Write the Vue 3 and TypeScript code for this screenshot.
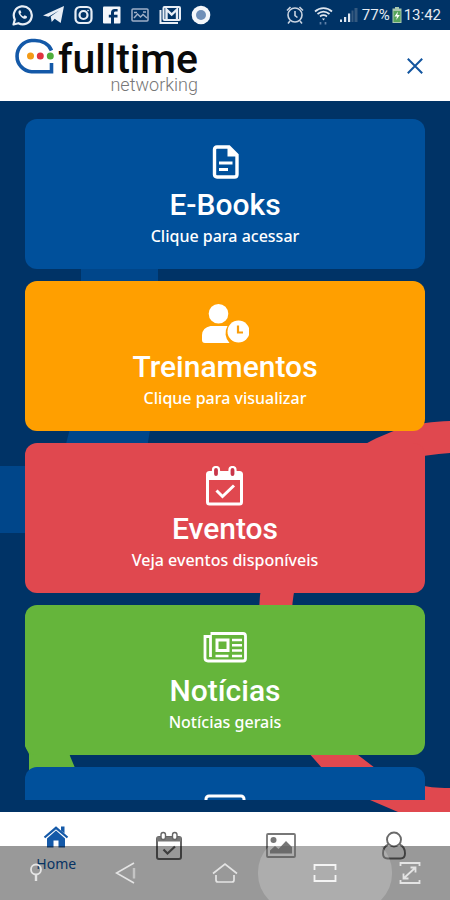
<script setup lang="ts">
import { ref } from 'vue'

type CardIcon = 'document' | 'training' | 'calendar' | 'news' | 'screen'
type NavIcon = 'home' | 'calendar' | 'picture' | 'user'

interface MenuCard {
  icon: CardIcon
  tone: string
  title: string
  hint: string
}

interface NavItem {
  icon: NavIcon
  name: string
  label: string
}

const cards: MenuCard[] = [
  { icon: 'document', tone: 'blue', title: 'E-Books', hint: 'Clique para acessar' },
  { icon: 'training', tone: 'orange', title: 'Treinamentos', hint: 'Clique para visualizar' },
  { icon: 'calendar', tone: 'red', title: 'Eventos', hint: 'Veja eventos disponíveis' },
  { icon: 'news', tone: 'green', title: 'Notícias', hint: 'Notícias gerais' },
  { icon: 'screen', tone: 'blue', title: '', hint: '' },
]

const navItems: NavItem[] = [
  { icon: 'home', name: 'Home', label: 'Home' },
  { icon: 'calendar', name: 'Eventos', label: '' },
  { icon: 'picture', name: 'Galeria', label: '' },
  { icon: 'user', name: 'Perfil', label: '' },
]

const active = ref<NavIcon>('home')
</script>

<template>
  <div class="screen">
    <div class="status">
      <div class="status-left">
        <svg width="21" height="22" viewBox="0 0 21 22" fill="none" stroke="#e8eef6">
          <path d="M1.5 20.5l1.3-5A9 9 0 1 1 6.400 19.200z" stroke-width="2.200" stroke-linejoin="round" />
          <path d="M7 6.500c-1.200 1.500-.4 3.700 1.800 6s4.600 3 6 1.500l.2-1.500-2.300-1.200-1.300 1.200c-1.500-.6-2.400-1.500-3-3l1-1-1-2.300z" fill="#e8eef6" stroke="none" />
        </svg>
        <svg width="21" height="20" viewBox="0 0 21 20" fill="#e8eef6">
          <path d="M0 10.500L21 1l-3.300 17-6-4.300-3 3.300-1-5.500L16 5.500 5.500 11.800z" />
        </svg>
        <svg width="19" height="20" viewBox="0 0 19 20" fill="none" stroke="#e8eef6" stroke-width="2.200">
          <rect x="1.500" y="2" width="16" height="16" rx="4.500" />
          <circle cx="9.500" cy="10" r="4" />
          <circle cx="14" cy="5.600" r=".5" stroke-width="1" />
        </svg>
        <svg width="18" height="20" viewBox="0 0 18 20">
          <rect x="0" y="1.500" width="17.500" height="17" rx="1" fill="#f4f7fb" />
          <path d="M11 19v-6.500h3.500v-2.700H11V8c0-1 .5-1.500 1.600-1.500h2V4h-2.800C9.200 4 8 5.500 8 7.600v2.200H5.800v2.700H8V19z" fill="#033468" />
        </svg>
        <svg width="18" height="20" viewBox="0 0 18 20" fill="none" stroke="#9fb0c8" stroke-width="1.500">
          <rect x="1" y="4" width="16" height="12" rx="1" />
          <path d="M3 13l3.500-4 3 3 2.500-2.500 4 3.500M3 7.500h3M12 7h3" />
        </svg>
        <svg width="22" height="20" viewBox="0 0 22 20" fill="none" stroke="#e8eef6" stroke-width="2">
          <path d="M1.500 5v13H19" />
          <rect x="4.500" y="2" width="16.500" height="13" rx="1" />
          <path d="M7.500 15V4.500l5.200 5 5.300-5V15" stroke-width="2.400" />
        </svg>
        <svg width="20" height="20" viewBox="0 0 20 20">
          <circle cx="10" cy="10" r="9.300" fill="#f4f7fb" />
          <circle cx="10" cy="10" r="5" fill="#6f8fb8" />
        </svg>
      </div>
      <div class="status-right">
        <svg class="alarm" width="18" height="20" viewBox="0 0 18 20" fill="none" stroke="#c9d3e0" stroke-width="1.600">
          <circle cx="9" cy="10" r="7" />
          <path d="M9 6v4.500l2.500 2M1 5.500L4.500 2M17 5.500L13.500 2M4 16l-2 2.500M14 16l2 2.500" />
        </svg>
        <svg class="wifi" width="19" height="20" viewBox="0 0 19 20" fill="none" stroke="#dfe6ef" stroke-width="1.700">
          <path d="M1 6.500c5-4.500 12-4.500 17 0M3.500 9c3.700-3 8.300-3 12 0M6 11.500c2.300-1.700 4.700-1.700 7 0" />
          <path d="M8 13.500h3l-1.500 2z" fill="#dfe6ef" stroke="none" />
          <path d="M6.500 17v2.500M11.500 17v2.500" stroke="#5f80a8" />
        </svg>
        <svg width="19" height="18" viewBox="0 0 19 18">
          <path d="M1 13.500h2V16H1zM5 11h2.200v5H5zM9 7.500h2.200V16H9z" fill="#dfe6ef" />
          <path d="M12.500 4.500h2V16h-2zM15.500 2h3v14h-3z" fill="#34597f" />
        </svg>
        <span class="battery-level">77%</span>
        <svg class="battery" width="10" height="16" viewBox="0 0 10 16">
          <path d="M3 0h4v1.500h2.500V16H.5V1.500H3z" fill="#a9c8ae" />
          <rect x="1.500" y="4" width="7" height="11" fill="#58a55c" />
          <path d="M6 4.500L2.500 9.500H5L4.200 13l3.600-5H5.300z" fill="#fff" />
        </svg>
        <span>13:42</span>
      </div>
    </div>

    <header class="header">
      <a class="logo" href="#" aria-label="fulltime networking">
        <svg class="mark" width="41" height="38" viewBox="13 36 41 38" fill="none">
          <path d="M51.500 49.500C49 43 42 39.500 35 39.500H31.500A15.700 15.700 0 0 0 31.500 70.800H51.500V62" stroke="#1459a8" stroke-width="3.600" />
          <circle cx="30.500" cy="55" r="3.500" fill="#f39a16" />
          <circle cx="40.300" cy="55" r="3.500" fill="#e0343f" />
          <circle cx="50.300" cy="55" r="3.500" fill="#4fae3a" />
        </svg>
        <span class="wordmark">
          <span class="word-main">fulltime</span>
          <span class="word-sub">networking</span>
        </span>
      </a>
      <button class="close" type="button" aria-label="Fechar">
        <svg width="16" height="16" viewBox="0 0 16 16" fill="none" stroke="#12559f" stroke-width="2">
          <path d="M.8.8l14.400 14.400M15.200.8L.8 15.200" />
        </svg>
      </button>
    </header>

    <main class="content">
      <svg class="backdrop" viewBox="0 101 450 711" preserveAspectRatio="xMidYMid slice" aria-hidden="true">
        <path d="M81 180H158V360C158 400 150 425 147 450V533H0V466H60C64 450 81 400 81 340z" fill="#00468a" />
        <path d="M450 421C415 422 390 430 360 447C295 480 262 540 259 610H292C297 540 340 480 400 461C420 456 435 454 450 453z" fill="#e0484f" />
        <path d="M300 743L322 768C336 781 352 792 370 800L398 812H450V788C435 788 427 787 420 785C400 780 385 775 375 768L345 745z" fill="#e0484f" />
        <path d="M25 738V746L29 754V775H78L70 756L66 738z" fill="#65b53b" />
      </svg>
      <div class="list">
        <button v-for="(card, i) in cards" :key="i" type="button" class="card" :class="card.tone">
          <svg class="card-icon" width="48" height="40" viewBox="0 0 48 40" fill="none" stroke="#fff" aria-hidden="true">
            <template v-if="card.icon === 'document'">
              <path d="M16 5H28L36 13V32.500Q36 35 33.500 35H16Q13.500 35 13.500 32.500V7.500Q13.500 5 16 5z" stroke-width="3.400" />
              <path d="M26.500 5L36 14.500H26.500z" fill="#fff" stroke="none" />
              <path d="M18 21H31.500M18 27.500H27" stroke-width="3" />
            </template>
            <template v-else-if="card.icon === 'training'">
              <g fill="#fff" stroke="none">
                <circle cx="17.500" cy="9.800" r="9.800" />
                <path d="M9.500 22H26.500A14 14 0 0 0 28.500 39H4Q1 39 1 36V31Q1.500 23.500 9.500 22z" />
                <circle cx="37.500" cy="27.500" r="11" />
              </g>
              <path d="M37 21.500V28.500H42" stroke="#f99d0a" stroke-width="2.200" />
            </template>
            <template v-else-if="card.icon === 'calendar'">
              <rect x="6.500" y="6.500" width="34" height="31.500" rx="2" stroke-width="3" />
              <path d="M6 6H41V14H6z" fill="#fff" stroke="none" />
              <rect x="12" y="1" width="6" height="10" rx="3" fill="#c9364a" stroke-width="2.200" />
              <rect x="28.500" y="1" width="6" height="10" rx="3" fill="#c9364a" stroke-width="2.200" />
              <path d="M15.500 24.500L21.500 30.500L33 19.500" stroke-width="3" />
            </template>
            <template v-else-if="card.icon === 'news'">
              <path d="M9.500 5.500H42Q44.500 5.500 44.500 8V30.500Q44.500 33 42 33H7Q4 33 4 30V8.500H9.500V29" stroke-width="2.800" />
              <rect x="16" y="12" width="11" height="10.500" stroke-width="3" />
              <path d="M31 12H41M31 17.300H41M31 22.500H41M14.500 28H27.500M31 28H41" stroke-width="2.600" />
            </template>
            <template v-else>
              <rect x="5" y="6" width="38" height="25" rx="3" stroke-width="3" />
              <path d="M1 36H47" stroke-width="3" />
            </template>
          </svg>
          <span v-if="card.title" class="card-title">{{ card.title }}</span>
          <span v-if="card.hint" class="card-hint">{{ card.hint }}</span>
        </button>
      </div>
    </main>

    <footer class="bottom">
      <nav class="tabs">
        <a
          v-for="item in navItems"
          :key="item.icon"
          href="#"
          class="tab"
          :class="{ current: active === item.icon }"
          :aria-label="item.name"
          @click.prevent="active = item.icon"
        >
          <svg v-if="item.icon === 'home'" width="26" height="22" viewBox="0 0 26 22" fill="#1459a8">
            <path d="M13 4.500L22 12.500V21.500H15.500V14.500H10.500V21.500H4V12.500z" />
            <path d="M1.500 11.500L13 1.800L24.500 11.500" fill="none" stroke="#1459a8" stroke-width="2.200" />
            <path d="M18 .5H21.500V7.500L18 4.500z" />
          </svg>
          <svg v-else-if="item.icon === 'calendar'" width="28" height="30" viewBox="0 0 28 30" fill="none" stroke="#666">
            <rect x="2" y="6" width="24" height="22" rx="2" stroke-width="2" />
            <path d="M2 6H26V10.500H2z" fill="#777" stroke="none" />
            <rect x="6" y="1.500" width="4.500" height="7" rx="2.200" fill="#fff" stroke-width="1.400" />
            <rect x="17.500" y="1.500" width="4.500" height="7" rx="2.200" fill="#fff" stroke-width="1.400" />
            <path d="M8.500 18.500L12.500 22.500L20 15.500" stroke-width="2.200" />
          </svg>
          <svg v-else-if="item.icon === 'picture'" width="30" height="30" viewBox="0 0 30 30" fill="#777">
            <rect x="1" y="3" width="28" height="23" rx="1" fill="none" stroke="#777" stroke-width="1.800" />
            <circle cx="7.500" cy="9" r="3" />
            <path d="M4 22.500V19.500L9 15L12.500 18L20 10L26 16V22.500z" />
          </svg>
          <svg v-else width="26" height="30" viewBox="0 0 26 30" fill="none" stroke="#6a6a6a" stroke-width="1.900">
            <circle cx="13" cy="8.500" r="7" />
            <path d="M7.500 13.500C3.500 15 2 18.500 2 22.500Q2 27.500 6.500 27.500H19.500Q24 27.500 24 22.500C24 18.500 22.500 15 18.500 13.500" />
          </svg>
          <span v-if="item.label" class="tab-label">{{ item.label }}</span>
        </a>
      </nav>

      <div class="system">
        <button type="button" class="sys" aria-label="Ocultar barra">
          <svg width="14" height="20" viewBox="0 0 14 20" fill="none" stroke="#e4e4e4" stroke-width="1.800">
            <circle cx="7" cy="6.500" r="5" />
            <path d="M7 11.500V18" stroke-width="2.400" />
          </svg>
        </button>
        <button type="button" class="sys" aria-label="Voltar">
          <svg width="22" height="22" viewBox="0 0 22 22" fill="none" stroke="#e4e4e4" stroke-width="1.600">
            <path d="M19 1L1.500 11L19 21" />
            <path d="M19 6V16.500" stroke="#c4c4c4" stroke-width="2.400" />
          </svg>
        </button>
        <button type="button" class="sys" aria-label="Início">
          <svg width="26" height="22" viewBox="0 0 26 22" fill="none" stroke="#e4e4e4" stroke-width="1.700">
            <path d="M1 11.500L13 2L25 11.500" />
            <path d="M4 13V18Q4 20 6 20H20Q22 20 22 18V13" />
          </svg>
        </button>
        <button type="button" class="sys pressed" aria-label="Recentes">
          <svg width="24" height="20" viewBox="0 0 24 20" fill="none" stroke="#f4f4f4" stroke-width="1.800">
            <path d="M1.500 7V2H22.500V7M1.500 12V18H22.500V12" />
          </svg>
        </button>
        <button type="button" class="sys" aria-label="Tela cheia">
          <svg width="22" height="24" viewBox="0 0 22 24" fill="none" stroke="#e4e4e4" stroke-width="1.800">
            <path d="M1.500 5V2H20.500V5M1.500 19V22H20.500V19" />
            <path d="M4.500 17.500L16.500 6.500M4.500 12.500V17.500H9.500M11.500 6.500H16.500V11.500" />
          </svg>
        </button>
      </div>
    </footer>
  </div>
</template>

<style>
body {
  margin: 0;
  background: #003366;
}
</style>

<style scoped>
.screen {
  display: flex;
  flex-direction: column;
  height: 100vh;
  overflow: hidden;
  background: #003366;
  font-family: 'Noto Sans', 'Liberation Sans', sans-serif;
}

button {
  margin: 0;
  padding: 0;
  border: 0;
  background: none;
  font: inherit;
  cursor: pointer;
}

svg {
  display: block;
  flex: none;
}

.status {
  display: flex;
  flex: none;
  align-items: center;
  justify-content: space-between;
  height: 30px;
  padding: 0 9px 0 12px;
  color: #e6ebf2;
  font-family: Roboto, 'Liberation Sans', sans-serif;
  font-size: 15px;
}

.status-left {
  display: flex;
  align-items: center;
  gap: 10px;
}

.status-right {
  display: flex;
  align-items: center;
}

.alarm {
  margin-right: 10px;
}

.wifi {
  margin-right: 6px;
}

.battery-level {
  margin-left: 4px;
}

.battery {
  margin: 0 2px;
}

.header {
  display: flex;
  flex: none;
  align-items: center;
  justify-content: space-between;
  height: 71px;
  padding: 0 23px 0 13px;
  background: #fff;
}

.logo {
  display: flex;
  align-items: flex-start;
  gap: 4px;
  padding-bottom: 2px;
  text-decoration: none;
  font-family: Roboto, 'Liberation Sans', sans-serif;
}

.wordmark {
  display: flex;
  flex-direction: column;
  align-items: flex-end;
  margin-top: 4px;
}

.word-main {
  color: #0a0a0a;
  font-size: 41px;
  font-weight: 500;
  line-height: 36px;
}

.word-sub {
  color: #777;
  font-size: 18px;
  font-weight: 300;
  line-height: 16px;
}

.close {
  display: grid;
  place-items: center;
  width: 24px;
  height: 24px;
}

.content {
  position: relative;
  display: flex;
  flex: 1;
  min-height: 0;
  padding: 18px 25px 12px;
}

.backdrop {
  position: absolute;
  inset: 0;
  width: 100%;
  height: 100%;
}

.list {
  position: relative;
  display: flex;
  flex: 1;
  flex-direction: column;
  gap: 12px;
  overflow: hidden;
}

.card {
  display: flex;
  flex: none;
  flex-direction: column;
  align-items: center;
  min-height: 150px;
  padding: 23px 12px 20px;
  border-radius: 12px;
  color: #fff;
}

.blue {
  background: #00509b;
}

.orange {
  background: #ff9f00;
}

.red {
  background: #e0484f;
}

.green {
  background: #65b53b;
}

.card-icon {
  margin-bottom: 4px;
}

.card-title {
  font-family: Roboto, 'Liberation Sans', sans-serif;
  font-size: 30px;
  font-weight: 500;
  line-height: 38px;
}

.card-hint {
  font-size: 16px;
  font-weight: 500;
  line-height: 24px;
}

.bottom {
  position: relative;
  flex: none;
  height: 88px;
  background: #fff;
}

.tabs {
  display: grid;
  grid-template-columns: repeat(4, 1fr);
  height: 100%;
}

.tab {
  display: flex;
  flex-direction: column;
  align-items: center;
  padding-top: 19px;
  color: #0d56a6;
  text-decoration: none;
}

.current {
  padding-top: 14px;
}

.tab-label {
  margin-top: 6px;
  font-size: 14px;
  line-height: 20px;
}

.system {
  position: absolute;
  right: 0;
  bottom: 0;
  left: 0;
  display: grid;
  grid-template-columns: 48fr 132fr 66fr 134fr 36fr;
  height: 54px;
  padding: 0 22px 0 12px;
  box-sizing: border-box;
  overflow: hidden;
  background: rgba(0, 0, 0, 0.4);
}

.sys {
  display: grid;
  place-items: center;
}

.pressed {
  margin: -10px 0;
  border-radius: 36px;
  background: rgba(255, 255, 255, 0.2);
}
</style>
